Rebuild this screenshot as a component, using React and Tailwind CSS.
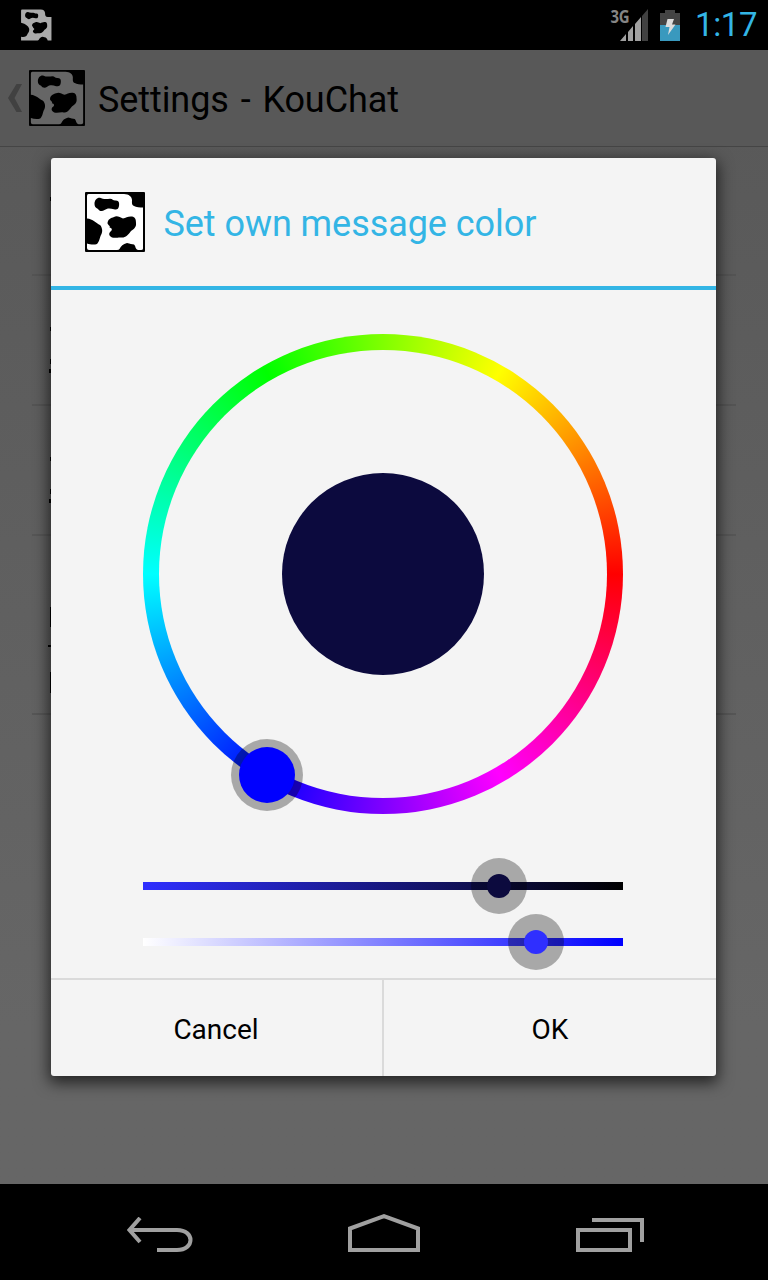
import React from "react";

function CowIcon({ className, paper = "#fff", ink = "#000" }) {
  return (
    <svg className={className} viewBox="0 0 60 60">
      <rect width="60" height="60" rx="1" fill={ink} />
      <path d="M3.500 2H39C44 2 47 5 47 8C47 10 46.500 13 49 14C51 15.500 55 15.500 58 15.500V56.500Q58 58 56 58H53C50 57 51 54.500 49 52.500C47 52.500 45 51.500 42 51C38 52 36 54 34.500 57Q34 58 32 58H4Q2 58 2 56V51.500C5 52.500 9 53 12 52C15 49 14.500 45 16.500 42C18 39 17 35 15 33C11 31 8 27 2 26.500V4Q2 2 3.500 2Z" fill={paper} />
      <path d="M9.500 12C9.500 8 12 5.500 15 5.800C18 7.500 22 7 25 6.800C28 7 28 9 31 8.500C34 8.800 34.500 11 34 14C33.500 17 32 18 29 17.300C25 16 22 16 19.500 18C17 20 14 19 13 17C10.500 16 9.500 14 9.500 12Z" fill={ink} />
      <path d="M22.500 31C23 27 26 26 29 25C32 23 35 25.500 38 26.500C41 26 43 24 47 24.500C50 25 51 27 51 31C51.500 35 49 37 46 39C43 43 41 45.500 37 45.500C33 45 31 46.500 27 45.500C24 44 23.500 42 25 40C28 38 27 36 24.500 35.500C26 34 22.500 33 22.500 31Z" fill={ink} />
    </svg>
  );
}

function StatusBar() {
  return (
    <header className="flex h-[50px] shrink-0 items-center bg-black pl-5 pr-3">
      <svg className="-mt-px h-8 w-8" viewBox="0 0 60 60">
        <path d="M3 1H39C44 1 47 4 47 8C47 12 48 15 52 15H59V59H52C51 56 49 53 46 53C42 50 37 53 35 58L33 59H2V52C8 53 13 52 14 47C19 41 18 36 14 32C10 28 6 27 2 26V3Z" fill="#aaa" />
        <path d="M9.500 12C9.500 8 12 5.500 15 5.800C18 7.500 22 7 25 6.800C28 7 28 9 31 8.500C34 8.800 34.500 11 34 14C33.500 17 32 18 29 17.300C25 16 22 16 19.500 18C17 20 14 19 13 17C10.500 16 9.500 14 9.500 12Z" />
        <path d="M22.500 31C23 27 26 26 29 25C32 23 35 25.500 38 26.500C41 26 43 24 47 24.500C50 25 51 27 51 31C51.500 35 49 37 46 39C43 43 41 45.500 37 45.500C33 45 31 46.500 27 45.500C24 44 23.500 42 25 40C28 38 27 36 24.500 35.500C26 34 22.500 33 22.500 31Z" />
      </svg>
      <div className="ml-auto flex items-center">
        <span className="mb-[17px] font-['Open_Sans',sans-serif] text-[17px] leading-none font-bold tracking-[-0.5px] text-[#858585]">
          <span className="inline-block origin-right scale-x-[0.88]">3G</span>
        </span>
        <svg className="-ml-[9px] h-8 w-7" viewBox="0 0 28 32">
          <path d="M0 32L6 25V32ZM8 32V23L13 17V32ZM15 32V15L21 8V32Z" fill="#a0a0a0" />
          <path d="M22 32V7L28 0V32Z" fill="#404040" />
        </svg>
        <svg className="ml-3 h-8 w-5" viewBox="0 0 20 32">
          <path d="M0 4H5V1H15V4H20V16H0Z" fill="#444" />
          <path d="M0 16H20V32H0Z" fill="#3999be" />
          <path d="M7.500 10H14L12 15.500H15.500L8 26L9.500 18H5.500Z" fill="#ddd" />
        </svg>
        <span className="ml-[15px] w-[61px] whitespace-nowrap font-[Roboto,sans-serif] text-[33px] leading-[50px] tracking-[-0.4px] text-[#33b5e5]">1:17</span>
      </div>
    </header>
  );
}

function ActionBar() {
  return (
    <div className="flex h-[97px] shrink-0 items-center border-b border-[#454545] bg-[#585858] pl-2">
      <svg className="h-7 w-[14px]" viewBox="0 0 14 28">
        <path d="M8.500 0H14L6.500 14L14 28H8.500L0 14Z" fill="#414141" />
      </svg>
      <CowIcon className="ml-[7px] h-14 w-14" paper="#666" />
      <h1 className="ml-[13px] whitespace-nowrap pt-[3px] font-[Roboto,sans-serif] text-[36px] font-normal tracking-[-0.08px] [word-spacing:3px] text-black">Settings - KouChat</h1>
    </div>
  );
}

function SettingsList() {
  return (
    <div className="flex flex-1 flex-col px-8">
      <div className="flex h-[129px] flex-col border-b-2 border-[#545454] pt-[50px] pl-[18px]">
        <div className="h-1 w-px bg-black" />
      </div>
      <div className="flex h-[130px] flex-col border-b-2 border-[#545454] pt-[51px] pl-[18px]">
        <div className="h-1 w-px bg-black" />
        <div className="mt-7 h-[5px] w-px bg-black" />
        <div className="mt-[5px] -ml-px h-1 w-0.5 bg-black" />
      </div>
      <div className="flex h-[130px] flex-col border-b-2 border-[#565656] pt-[51px] pl-[18px]">
        <div className="h-1 w-px bg-black" />
        <div className="mt-7 h-[5px] w-px bg-black" />
        <div className="mt-[5px] -ml-px h-1 w-0.5 bg-black" />
      </div>
      <div className="flex h-[179px] flex-col border-b-2 border-[#565656] pt-[71px] pl-[18px]">
        <div className="h-5 w-px bg-black" />
        <div className="mt-[18px] -ml-0.5 h-0.5 w-[3px] bg-black" />
        <div className="mt-[25px] h-[21px] w-px bg-black" />
      </div>
    </div>
  );
}

function ColorWheel() {
  return (
    <div className="relative mx-auto flex h-[480px] w-[480px] items-center justify-center rounded-full bg-[conic-gradient(from_90deg,#f00,#f0f,#00f,#0ff,#0f0,#ff0,#f00)]">
      <div className="flex h-[448px] w-[448px] items-center justify-center rounded-full bg-[#f4f4f4]">
        <div className="h-[202px] w-[202px] rounded-full bg-[#0c0a3e]" />
      </div>
      <div className="absolute top-[405px] left-[88px] flex h-[72px] w-[72px] items-center justify-center rounded-full bg-black/31">
        <div className="h-14 w-14 rounded-full bg-[#00f]" />
      </div>
    </div>
  );
}

function Dialog() {
  return (
    <section className="absolute top-[158px] left-[51px] flex h-[918px] w-[665px] flex-col rounded-[3px] bg-[#f4f4f4] shadow-[0_5px_15px_2px_rgba(0,0,0,0.65)]">
      <div className="flex h-[132px] shrink-0 items-center border-b-4 border-[#33b5e5] pl-[34px]">
        <CowIcon className="h-[60px] w-[60px]" />
        <h2 className="ml-[18.500px] whitespace-nowrap pt-[3px] font-[Roboto,sans-serif] text-[36px] font-normal tracking-[-0.06px] text-[#33b5e5]">Set own message color</h2>
      </div>
      <div className="flex h-[688px] shrink-0 flex-col pt-11 pr-px">
        <ColorWheel />
        <div className="relative mx-auto mt-[68px] h-2 w-[480px] bg-[linear-gradient(to_right,#2f2fff,#000)]">
          <div className="absolute -top-6 left-[328px] flex h-14 w-14 items-center justify-center rounded-full bg-black/31">
            <div className="h-6 w-6 rounded-full bg-[#0c0a3e]" />
          </div>
        </div>
        <div className="relative mx-auto mt-12 h-2 w-[480px] bg-[linear-gradient(to_right,#fff,#00f)]">
          <div className="absolute -top-6 left-[365px] flex h-14 w-14 items-center justify-center rounded-full bg-black/31">
            <div className="h-6 w-6 rounded-full bg-[#2f2fff]" />
          </div>
        </div>
      </div>
      <div className="flex flex-1 border-t-2 border-[#dadada] font-[Roboto,sans-serif] text-[28px] text-black">
        <button className="w-[333px] border-r-2 border-[#dadada] pt-[3px] pr-px">Cancel</button>
        <button className="flex-1 pt-[3px]">OK</button>
      </div>
    </section>
  );
}

function NavigationBar() {
  return (
    <nav className="flex h-24 shrink-0 items-center justify-between bg-black pr-[124px] pl-[127px]">
      <svg className="mt-1.5 h-9 w-[67px]" viewBox="0 0 67 36" fill="none" stroke="#a0a0a0" strokeWidth="4">
        <path d="M3 13H50C68 13 68 33 50 33H30" />
        <path d="M13 1L2.500 13L13 25" />
      </svg>
      <svg className="mt-0.5 -ml-0.5 h-[38px] w-[72px]" viewBox="0 0 72 38" fill="none" stroke="#a0a0a0" strokeWidth="4">
        <path d="M2 36V14.500L36 2.200L70 14.500V36Z" />
      </svg>
      <svg className="mt-1.5 h-[34px] w-[68px]" viewBox="0 0 68 34" fill="none" stroke="#a0a0a0" strokeWidth="4">
        <path d="M2 12H54V32H2ZM16 2H66V24" />
      </svg>
    </nav>
  );
}

export default function App() {
  return (
    <main className="relative flex h-[1280px] w-[768px] flex-col overflow-hidden bg-linear-to-b from-[#595959] from-10% to-[#666] to-80%">
      <StatusBar />
      <ActionBar />
      <SettingsList />
      <Dialog />
      <NavigationBar />
    </main>
  );
}
